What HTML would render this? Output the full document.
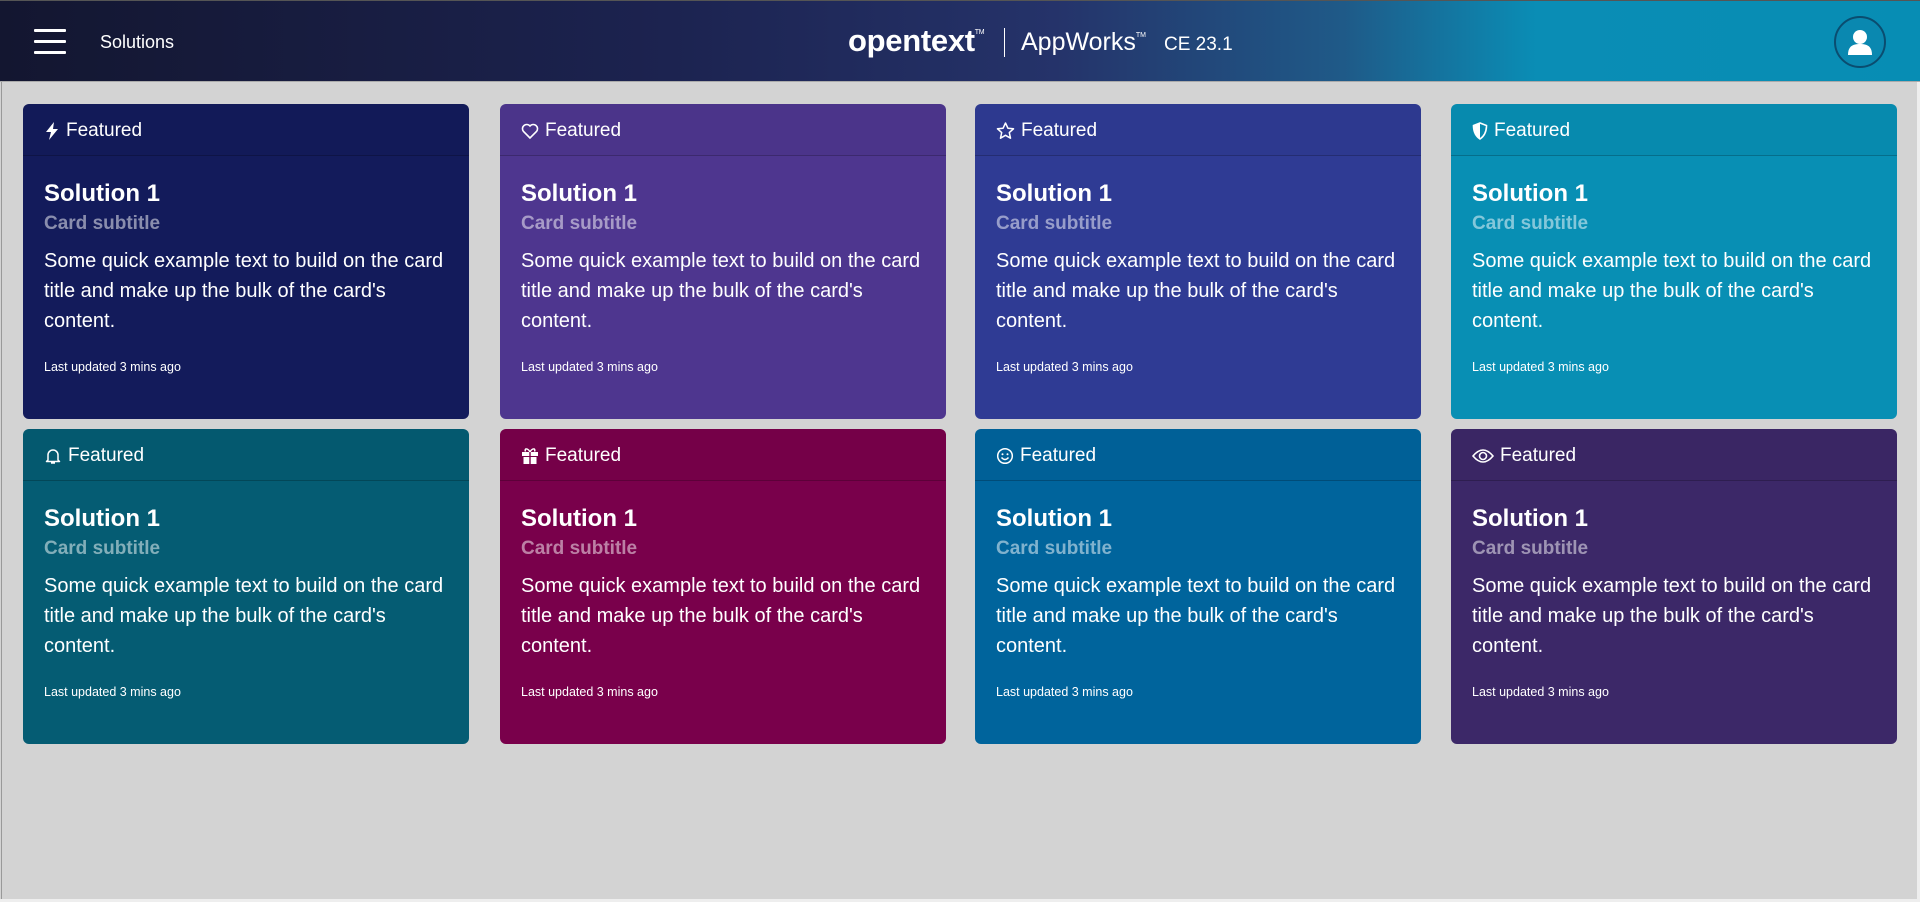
<!DOCTYPE html>
<html><head><meta charset="utf-8"><style>
*{box-sizing:border-box;margin:0;padding:0}
html,body{width:1920px;height:902px;overflow:hidden}
body{background:#d3d3d3;font-family:"Liberation Sans","DejaVu Sans",sans-serif;position:relative}
.hdr{position:absolute;left:0;top:0;width:1920px;height:82px;border-top:1px solid #555;
background:linear-gradient(90deg,#131630 0%,#1c2350 35%,#25336a 55%,#1f5a88 70%,#0a8db5 80%,#078db4 100%);border-bottom:1px solid #aaa}
.ham{position:absolute;left:34px;top:28px;width:32px}
.ham i{display:block;height:3px;background:#fff;margin-bottom:8px;border-radius:1px}
.sol{position:absolute;left:100px;top:31px;color:#fff;font-size:18px}
.logo{position:absolute;left:848px;top:22px;color:#fff;font-size:31px;font-weight:bold;letter-spacing:-0.3px}
.logo sup{font-size:7px;font-weight:normal;vertical-align:top;position:relative;top:6px}
.div{position:absolute;left:1004px;top:27px;width:1px;height:29px;background:#fff}
.app{position:absolute;left:1021px;top:27px;color:#fff;font-size:25px}
.app sup{font-size:7px;vertical-align:top;position:relative;top:4px}
.ce{position:absolute;left:1164px;top:33px;color:#fff;font-size:19px}
.av{position:absolute;left:1834px;top:15px;width:52px;height:52px;border-radius:50%;border:2px solid #0a4d70;background:#0a88b0}
.lb{position:absolute;left:1px;top:82px;width:1px;height:820px;background:#999}
.rb{position:absolute;left:1917px;top:82px;width:3px;height:820px;background:#eee}
.bb{position:absolute;left:0;top:899px;width:1920px;height:3px;background:#eee}
.card{position:absolute;width:446px;height:315px;border-radius:6px;color:#fff;overflow:hidden}
.ch{height:52px;border-bottom:1px solid rgba(0,0,0,.2);background:rgba(0,0,0,.03);padding:3px 21px 0;display:flex;align-items:center;font-size:19px}
.ch svg{margin-right:6px}
.cb{padding:20px 21px}
.t{font-size:24px;font-weight:bold;line-height:30px;margin-top:3px}
.s{font-size:19px;font-weight:bold;color:rgba(255,255,255,.5);line-height:26px;margin-top:2px}
.p{font-size:20px;line-height:30px;margin-top:9px}
.u{font-size:12.5px;margin-top:24px}
</style></head><body>
<div class="hdr">
<div class="ham"><i></i><i></i><i></i></div>
<div class="sol">Solutions</div>
<div class="logo">opentext<sup>TM</sup></div>
<div class="div"></div>
<div class="app">AppWorks<sup>TM</sup></div>
<div class="ce">CE 23.1</div>
<div class="av"><svg width="48" height="48" viewBox="0 0 48 48"><circle cx="24" cy="19" r="7" fill="#fff"/><path d="M12 37c0-9 5-11 12-11s12 2 12 11z" fill="#fff"/></svg></div>
</div>
<div class="lb"></div><div class="rb"></div><div class="bb"></div>

<div class="card" style="left:23px;top:104px;background:#131b5b">
<div class="ch"><svg width="16" height="18" viewBox="0 0 16 18"><path d="M10 0L2 10h5l-2 8 9-11H9z" fill="#fff"/></svg>Featured</div>
<div class="cb"><div class="t">Solution 1</div><div class="s">Card subtitle</div><div class="p">Some quick example text to build on the card title and make up the bulk of the card's content.</div><div class="u">Last updated 3 mins ago</div></div></div>

<div class="card" style="left:500px;top:104px;background:#4e368f">
<div class="ch"><svg width="18" height="18" viewBox="0 0 18 18"><path d="M9 16L2.5 9.5A4 4 0 0 1 9 4a4 4 0 0 1 6.5 5.5z" fill="none" stroke="#fff" stroke-width="1.6"/></svg>Featured</div>
<div class="cb"><div class="t">Solution 1</div><div class="s">Card subtitle</div><div class="p">Some quick example text to build on the card title and make up the bulk of the card's content.</div><div class="u">Last updated 3 mins ago</div></div></div>

<div class="card" style="left:975px;top:104px;background:#2f3b94">
<div class="ch"><svg width="19" height="18" viewBox="0 0 19 18"><path d="M9.5 1l2.4 5.2 5.6.6-4.2 3.8 1.2 5.6-5-2.9-5 2.9 1.2-5.6L1.5 6.8l5.6-.6z" fill="none" stroke="#fff" stroke-width="1.5" stroke-linejoin="round"/></svg>Featured</div>
<div class="cb"><div class="t">Solution 1</div><div class="s">Card subtitle</div><div class="p">Some quick example text to build on the card title and make up the bulk of the card's content.</div><div class="u">Last updated 3 mins ago</div></div></div>

<div class="card" style="left:1451px;top:104px;background:#088fb4">
<div class="ch"><svg width="16" height="18" viewBox="0 0 16 18"><path d="M8 1L1.5 3.5C1.5 10 3.5 14 8 17c4.5-3 6.5-7 6.5-13.5z" fill="none" stroke="#fff" stroke-width="1.6"/><path d="M8 1L1.5 3.5C1.5 10 3.5 14 8 17z" fill="#fff"/></svg>Featured</div>
<div class="cb"><div class="t">Solution 1</div><div class="s">Card subtitle</div><div class="p">Some quick example text to build on the card title and make up the bulk of the card's content.</div><div class="u">Last updated 3 mins ago</div></div></div>

<div class="card" style="left:23px;top:429px;background:#055c73">
<div class="ch"><svg width="18" height="18" viewBox="0 0 18 18"><path d="M4 13V8a5 5 0 0 1 10 0v5l1.5 1.5h-13z M7 16h4" fill="none" stroke="#fff" stroke-width="1.5" stroke-linejoin="round"/></svg>Featured</div>
<div class="cb"><div class="t">Solution 1</div><div class="s">Card subtitle</div><div class="p">Some quick example text to build on the card title and make up the bulk of the card's content.</div><div class="u">Last updated 3 mins ago</div></div></div>

<div class="card" style="left:500px;top:429px;background:#79004b">
<div class="ch"><svg width="18" height="18" viewBox="0 0 18 18"><rect x="1" y="5" width="16" height="4" fill="#fff"/><rect x="2.5" y="10" width="13" height="7" fill="#fff"/><path d="M9 5C7 1 3 1 4.5 4.5M9 5c2-4 6-4 4.5-.5" fill="none" stroke="#fff" stroke-width="1.5"/><rect x="8.3" y="5" width="1.4" height="12" fill="#79004b"/></svg>Featured</div>
<div class="cb"><div class="t">Solution 1</div><div class="s">Card subtitle</div><div class="p">Some quick example text to build on the card title and make up the bulk of the card's content.</div><div class="u">Last updated 3 mins ago</div></div></div>

<div class="card" style="left:975px;top:429px;background:#00649c">
<div class="ch"><svg width="18" height="18" viewBox="0 0 18 18"><circle cx="9" cy="9" r="7.3" fill="none" stroke="#fff" stroke-width="1.5"/><circle cx="6.5" cy="7.3" r="1" fill="#fff"/><circle cx="11.5" cy="7.3" r="1" fill="#fff"/><path d="M5.5 10.5q3.5 4 7 0" fill="none" stroke="#fff" stroke-width="1.4"/></svg>Featured</div>
<div class="cb"><div class="t">Solution 1</div><div class="s">Card subtitle</div><div class="p">Some quick example text to build on the card title and make up the bulk of the card's content.</div><div class="u">Last updated 3 mins ago</div></div></div>

<div class="card" style="left:1451px;top:429px;background:#3c2868">
<div class="ch"><svg width="22" height="18" viewBox="0 0 22 18"><path d="M1 9q10-12 20 0q-10 12-20 0z" fill="none" stroke="#fff" stroke-width="1.6"/><circle cx="11" cy="9" r="3.5" fill="none" stroke="#fff" stroke-width="1.6"/></svg>Featured</div>
<div class="cb"><div class="t">Solution 1</div><div class="s">Card subtitle</div><div class="p">Some quick example text to build on the card title and make up the bulk of the card's content.</div><div class="u">Last updated 3 mins ago</div></div></div>
</body></html>
